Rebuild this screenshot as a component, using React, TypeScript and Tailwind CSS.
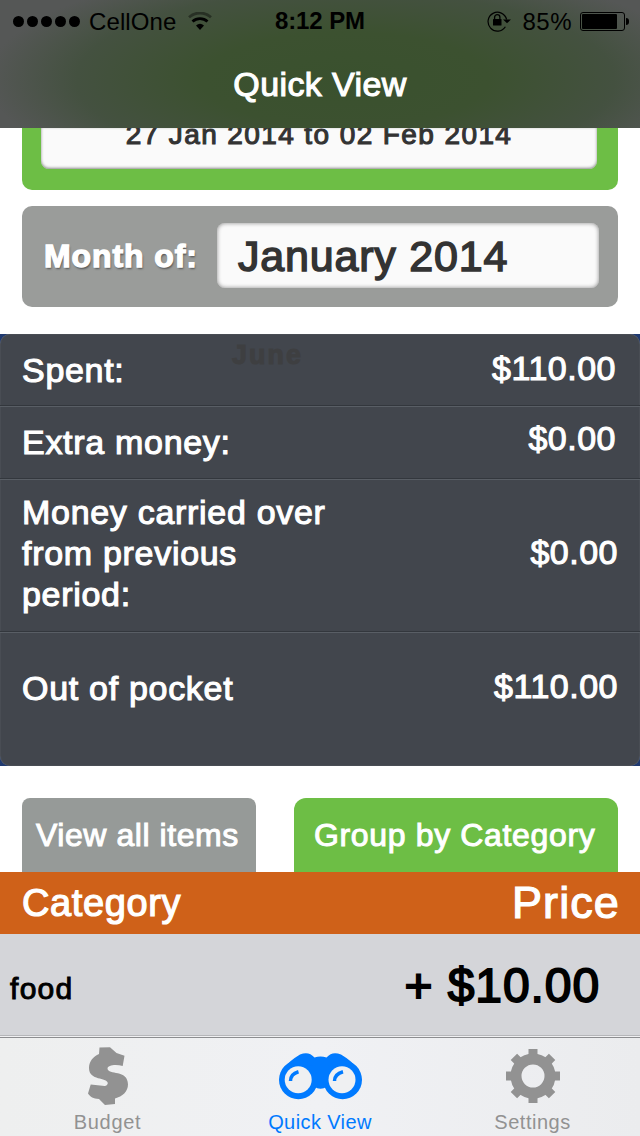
import { clsx } from "clsx";

function StatusBar() {
  return (
    <div className="grid h-10 grid-cols-3 text-2xl leading-10 text-black">
      <div className="flex items-center pl-[13px]">
        <div className="flex gap-[3px]">
          {[1, 2, 3, 4, 5].map((n) => (
            <span key={n} className="size-[11px] rounded-full bg-black" />
          ))}
        </div>
        <span className="ml-[9px] pt-0.5 tracking-[0.1px]">CellOne</span>
        <svg className="ml-3 h-[18px] w-6" viewBox="0 0 24 18" fill="none">
          <path d="M1 5.200a16.500 16.500 0 0 1 22 0" stroke="#000" strokeOpacity=".4" strokeWidth="2.800" />
          <path d="M4.500 9.500a11 11 0 0 1 15 0" stroke="#000" strokeWidth="2.800" />
          <path d="M8 13.400a6.200 6.200 0 0 1 8 0L12 18z" fill="#000" />
        </svg>
      </div>
      <div className="pt-px text-center font-bold tracking-[-0.1px]">8:12 PM</div>
      <div className="flex items-center justify-end pr-[11px]">
        <svg className="h-[22px] w-6" viewBox="0 0 24 22" fill="none">
          <path d="M18.4 16.7A9.4 9.4 0 1 1 19.6 9.5" stroke="#000" strokeWidth="1.2" />
          <path d="M16 9.500h8l-4 3.800z" fill="#000" />
          <rect x="6" y="9" width="8.500" height="6.5" rx=".6" fill="#000" />
          <path d="M7.600 9.5V7.3a2.650 2.650 0 0 1 5.300 0v2.2" stroke="#000" strokeWidth="1.3" />
        </svg>
        <span className="ml-[11px] pt-0.5 tracking-[0.5px]">85%</span>
        <div className="ml-2 h-[19px] w-[45px] rounded-[3px] border border-black p-px">
          <div className="h-full w-[35px] rounded-[1px] bg-black" />
        </div>
        <span className="ml-px h-[7px] w-[3px] rounded-r-full bg-black" />
      </div>
    </div>
  );
}

function Header() {
  return (
    <header className="h-32 shrink-0 bg-[#555753] bg-[radial-gradient(ellipse_56%_92%_at_54%_62%,#3a512e_0%,#3c5130_40%,#445140_75%,#555756_100%)]">
      <StatusBar />
      <h1 className="pt-[24px] text-center text-[34px] leading-10 tracking-[0.4px] text-white [-webkit-text-stroke:1.1px]">
        Quick View
      </h1>
    </header>
  );
}

function Periods() {
  return (
    <>
      <div className="mx-[22px] h-[62px] shrink-0 rounded-b-[10px] bg-[#6dbe45] pr-[21px] pl-[19px]">
        <div className="h-[41px] overflow-hidden rounded-b-[8px] bg-[#fafafa] text-center text-[28px] leading-8 tracking-[1.4px] whitespace-nowrap text-[#333] shadow-[inset_0_-1px_3px_#888] [-webkit-text-stroke:1.1px]">
          <div className="-mt-[9px]">27 Jan 2014 to 02 Feb 2014</div>
        </div>
      </div>
      <div className="mx-[22px] mt-4 flex h-[101px] shrink-0 items-start rounded-[10px] bg-[#9a9c9a] pt-[17px] pr-[19px] pl-[22px]">
        <span className="w-[173px] text-[32px] leading-[66px] font-bold tracking-[0.9px] whitespace-nowrap text-white [-webkit-text-stroke:1.3px] [text-shadow:1px_2px_2px_#555]">
          Month of:
        </span>
        <div className="h-[65px] flex-1 rounded-[8px] bg-[#fafafa] pl-[21px] text-[43px] leading-[66px] tracking-[0.8px] text-[#333] shadow-[inset_0_0_4px_#888] [-webkit-text-stroke:1.5px]">
          January 2014
        </div>
      </div>
    </>
  );
}

const totals = [
  { label: "Spent:", amount: "$110.00", row: "h-[72px] pt-4 pr-6", price: "-mt-0.5" },
  { label: "Extra money:", amount: "$0.00", row: "h-[73px] pt-4 pr-6", price: "-mt-1" },
  { label: "Money carried over from previous period:", amount: "$0.00", row: "h-[153px] pt-[13px] pr-[22px]", price: "mt-10" },
  { label: "Out of pocket", amount: "$110.00", row: "h-[134px] pt-9 pr-[22px]", price: "-mt-0.5" },
];

function Totals() {
  return (
    <section className="mt-[27px] h-[432px] shrink-0 bg-[#203a70]">
      <div className="relative h-full rounded-[10px] bg-[#42464d] shadow-[inset_0_0_1px_#8a8f96]">
        <span className="absolute top-[7px] left-[232px] text-[27px] leading-7 font-bold tracking-[2px] text-[#3e3f41] [-webkit-text-stroke:1px]">
          June
        </span>
        {totals.map((t, i) => (
          <div
            key={t.label}
            className={clsx(
              "relative flex items-start justify-between pl-[22px] text-[34px] leading-[41px] text-white [-webkit-text-stroke:1.1px]",
              t.row,
              i < totals.length - 1 && "shadow-[inset_0_-1px_#33373d,0_1px_#595e65]",
            )}
          >
            <span className="w-[320px] tracking-[0.7px]">{t.label}</span>
            <span className={clsx("tracking-[0.5px]", t.price)}>{t.amount}</span>
          </div>
        ))}
      </div>
    </section>
  );
}

function Items() {
  return (
    <>
      <div className="mt-8 flex h-[74px] shrink-0 justify-between px-[22px] text-[32px] leading-[74px] whitespace-nowrap text-white [-webkit-text-stroke:1px]">
        <div className="w-[234px] rounded-t-[8px] bg-[#969a98] pl-[14px] tracking-[0.55px]">View all items</div>
        <div className="w-[324px] rounded-t-[12px] bg-[#6dbe45] pl-5 tracking-[0.65px]">Group by Category</div>
      </div>
      <div className="flex h-[62px] shrink-0 justify-between bg-[#cf6119] pr-5 pl-[22px] text-white [-webkit-text-stroke:1.2px]">
        <span className="pt-px text-[38px] leading-[61px] tracking-[0.6px]">Category</span>
        <span className="text-[45px] leading-[61px] tracking-[1.1px]">Price</span>
      </div>
      <div className="flex h-[103px] shrink-0 justify-between border-b border-[#f0f0f2] bg-[#d4d5d9] pr-10 pl-[10px] text-black shadow-[inset_0_-1px_#b5b6b9]">
        <span className="pt-[3px] text-[30px] leading-[103px] tracking-[1.3px] [-webkit-text-stroke:1px]">food</span>
        <span className="text-[48px] leading-[103px] tracking-[0.9px] [-webkit-text-stroke:1.8px]">+ $10.00</span>
      </div>
    </>
  );
}

function DollarIcon() {
  return (
    <svg className="h-[58px] w-10" viewBox="0 0 40 58" fill="currentColor">
      <path d="M11.500.5 22 .3 28.500 6l8 2.700L34.700 19C28 17 19.500 18 19.500 21.500 20 28.500 40 22 40 37.500 40 44.500 34.500 49.500 27 51.500V57l-10 1-6-6C5 51.500 2.500 50 0 46.500L2.700 37.500l14 1.500C18.500 39 19.800 37.500 19.800 36 19 30 1 34 1 21 1 14 5.500 9.500 11 7Z" />
    </svg>
  );
}

function BinocularsIcon() {
  return (
    <svg className="h-[47px] w-[83px]" viewBox="0 0 83 47" fill="none">
      <path
        d="M4 15.500Q11 7.500 21 1.500C27-1 31.500 0 35.500 4.500Q41.500 2.500 47.500 4.500C51.500 0 56-1 62 1.500Q72 7.500 79 15.500L66 32 48 33.500Q41.500 38 35 33.500L17 32Z"
        fill="currentColor"
      />
      <circle cx="19.400" cy="26.800" r="19.400" fill="currentColor" />
      <circle cx="63.600" cy="26.800" r="19.400" fill="currentColor" />
      <circle cx="19.200" cy="26.800" r="13.500" fill="#eff0f2" />
      <circle cx="63" cy="26.800" r="13.500" fill="#eff0f2" />
      <path d="M11.500 28q0-7 8-9.300M55.500 28q0-7 8.500-9.300" stroke="currentColor" strokeWidth="3.500" />
    </svg>
  );
}

function GearIcon() {
  return (
    <svg className="size-[54px]" viewBox="0 0 54 54" fill="none" stroke="currentColor">
      <circle cx="27" cy="27" r="17" strokeWidth="11" />
      {[0, 45, 90, 135].map((deg) => (
        <path key={deg} d="M27 0v9M27 45v9" strokeWidth="9" transform={`rotate(${deg} 27 27)`} />
      ))}
    </svg>
  );
}

function TabBar() {
  return (
    <nav className="flex flex-1 border-t border-[#8c8d90] bg-linear-to-r from-[#eeefef] via-[#f0f1f4] to-[#ebecee] text-[20px] leading-6 text-[#929292]">
      <div className="flex w-[215px] flex-col items-center pt-[9px]">
        <DollarIcon />
        <span className="mt-[5px] tracking-[0.7px]">Budget</span>
      </div>
      <div className="flex w-[210px] flex-col items-center pt-[15px] text-[#007aff]">
        <BinocularsIcon />
        <span className="mt-[10px] tracking-[0.4px]">Quick View</span>
      </div>
      <div className="flex w-[215px] flex-col items-center pt-[11px]">
        <GearIcon />
        <span className="mt-[7px] tracking-[0.5px]">Settings</span>
      </div>
    </nav>
  );
}

export default function App() {
  return (
    <div className="flex h-[1136px] w-[640px] flex-col overflow-hidden bg-white font-['Liberation_Sans',sans-serif]">
      <Header />
      <Periods />
      <Totals />
      <Items />
      <TabBar />
    </div>
  );
}
